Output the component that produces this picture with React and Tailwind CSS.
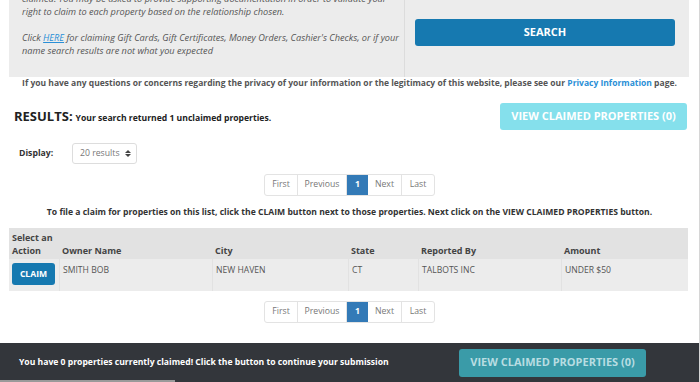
import React from "react";

const Pager = () => (
  <div className="flex justify-center">
    <div className="flex h-[22px] text-[8.7px] text-[#777] border border-[#e3e3e3] rounded-[3px] overflow-hidden">
      <span className="w-[33px] flex items-center justify-center border-r border-[#e3e3e3]">First</span>
      <span className="w-[49px] flex items-center justify-center border-r border-[#e3e3e3]">Previous</span>
      <span className="w-[21px] flex items-center justify-center bg-[#337ab7] text-white font-bold">1</span>
      <span className="w-[34px] flex items-center justify-center border-r border-[#e3e3e3]">Next</span>
      <span className="w-[32px] flex items-center justify-center">Last</span>
    </div>
  </div>
);

const cols = [
  { w: "w-[50px]", label: "Select an Action" },
  { w: "w-[153px]", label: "Owner Name" },
  { w: "w-[136px]", label: "City" },
  { w: "w-[70px]", label: "State" },
  { w: "w-[143px]", label: "Reported By" },
  { w: "flex-1", label: "Amount" },
];

const rowCell = "pl-[3px] pt-[5px] border-l border-[#e2e2e2]";

export default function App() {
  return (
    <div
      className="relative w-[700px] h-[382px] overflow-hidden bg-white border-r border-[#d6d6d6]"
      style={{ fontFamily: '"Open Sans", "Liberation Sans", sans-serif' }}
    >
      {/* top panel */}
      <div className="ml-[9px] mr-[10px] bg-[#ececec] h-[77px] flex overflow-hidden">
        <div className="w-[396px] border-r border-[#dcdcdc] pl-[13px] pr-2 italic text-[9.2px] leading-[13px] text-[#555] -mt-[8px] whitespace-nowrap">
          <p>claimed. You may be asked to provide supporting documentation in order to validate your</p>
          <p>right to claim to each property based on the relationship chosen.</p>
          <p className="mt-[13px]">
            Click <span className="text-[#2a8fd6] underline">HERE</span> for claiming Gift Cards, Gift Certificates, Money Orders, Cashier's Checks, or if your
          </p>
          <p>name search results are not what you expected</p>
        </div>
        <div className="flex-1 pl-[10px] pr-[14px] pt-[19px]">
          <div className="h-[27px] bg-[#1679b0] rounded-[3px] flex items-center justify-center text-white font-bold text-[11px]">
            SEARCH
          </div>
        </div>
      </div>

      <p className="text-[8.5px] font-bold text-[#555] text-center leading-[11px] whitespace-nowrap">
        If you have any questions or concerns regarding the privacy of your information or the legitimacy of this website, please see our{" "}
        <span className="text-[#2a8fd6]">Privacy Information</span> page.
      </p>

      {/* results */}
      <div className="flex items-center justify-between pl-[14px] pr-[12px] mt-[15px]">
        <div className="flex items-baseline text-[#222]">
          <span className="text-[13px] font-bold">RESULTS:</span>
          <span className="text-[8.6px] font-bold ml-[3px]">Your search returned 1 unclaimed properties.</span>
        </div>
        <div className="w-[187px] h-[27px] bg-[#85e0ec] rounded-[3px] flex items-center justify-center text-white font-bold text-[11px]">
          VIEW CLAIMED PROPERTIES (0)
        </div>
      </div>

      <div className="flex items-center pl-[19px] mt-[13px]">
        <span className="text-[8.7px] font-bold text-[#333] w-[53px]">Display:</span>
        <div className="w-[65px] h-[21px] border border-[#ddd] rounded-[3px] flex items-center pl-[7px] text-[8.7px] text-[#777] whitespace-nowrap">
          <span>20 results</span>
          <span className="ml-[5px] flex flex-col gap-[1px]">
            <span className="w-0 h-0 border-l-[3px] border-r-[3px] border-b-[3px] border-l-transparent border-r-transparent border-b-[#444]" />
            <span className="w-0 h-0 border-l-[3px] border-r-[3px] border-t-[3px] border-l-transparent border-r-transparent border-t-[#444]" />
          </span>
        </div>
      </div>

      <div className="mt-[10px]">
        <Pager />
      </div>

      <p className="text-[8.6px] font-bold text-[#333] text-center mt-[10px] leading-[12px] whitespace-nowrap">
        To file a claim for properties on this list, click the CLAIM button next to those properties. Next click on the VIEW CLAIMED PROPERTIES button.
      </p>

      {/* table */}
      <div className="ml-[9px] mr-[11px] mt-[10px]">
        <div className="flex bg-[#e2e2e2] h-[31px] font-bold text-[#444] text-[9px] leading-[13px]">
          {cols.map((c, i) => (
            <div key={i} className={`${c.w} pl-[3px] flex items-end pb-[2px]`}>
              {c.label}
            </div>
          ))}
        </div>
        <div className="flex bg-[#ececec] h-[32px] text-[#555] text-[8.6px] leading-[13px]">
          <div className="w-[50px] pl-[3px] pt-[4px]">
            <div className="w-[43px] h-[22px] bg-[#1679b0] rounded-[3px] flex items-center justify-center text-white font-bold text-[8.6px]">
              CLAIM
            </div>
          </div>
          <div className={`w-[153px] ${rowCell}`}>SMITH BOB</div>
          <div className={`w-[136px] ${rowCell}`}>NEW HAVEN</div>
          <div className={`w-[70px] ${rowCell}`}>CT</div>
          <div className={`w-[143px] ${rowCell}`}>TALBOTS INC</div>
          <div className={`flex-1 ${rowCell}`}>UNDER $50</div>
        </div>
      </div>

      <div className="mt-[10px]">
        <Pager />
      </div>

      {/* fixed bottom bar */}
      <div className="absolute left-0 right-0 bottom-0 h-[39px] bg-[#33363b] flex items-center pl-[19px]">
        <span className="text-white font-bold text-[8.6px] w-[440px] whitespace-nowrap">
          You have 0 properties currently claimed! Click the button to continue your submission
        </span>
        <div className="w-[187px] h-[28px] bg-[#3a9ba8] rounded-[3px] flex items-center justify-center text-[#b8dde2] font-bold text-[11px]">
          VIEW CLAIMED PROPERTIES (0)
        </div>
        <div className="absolute left-0 bottom-0 w-[175px] h-[2px] bg-[#9a9a9a]" />
      </div>
    </div>
  );
}
